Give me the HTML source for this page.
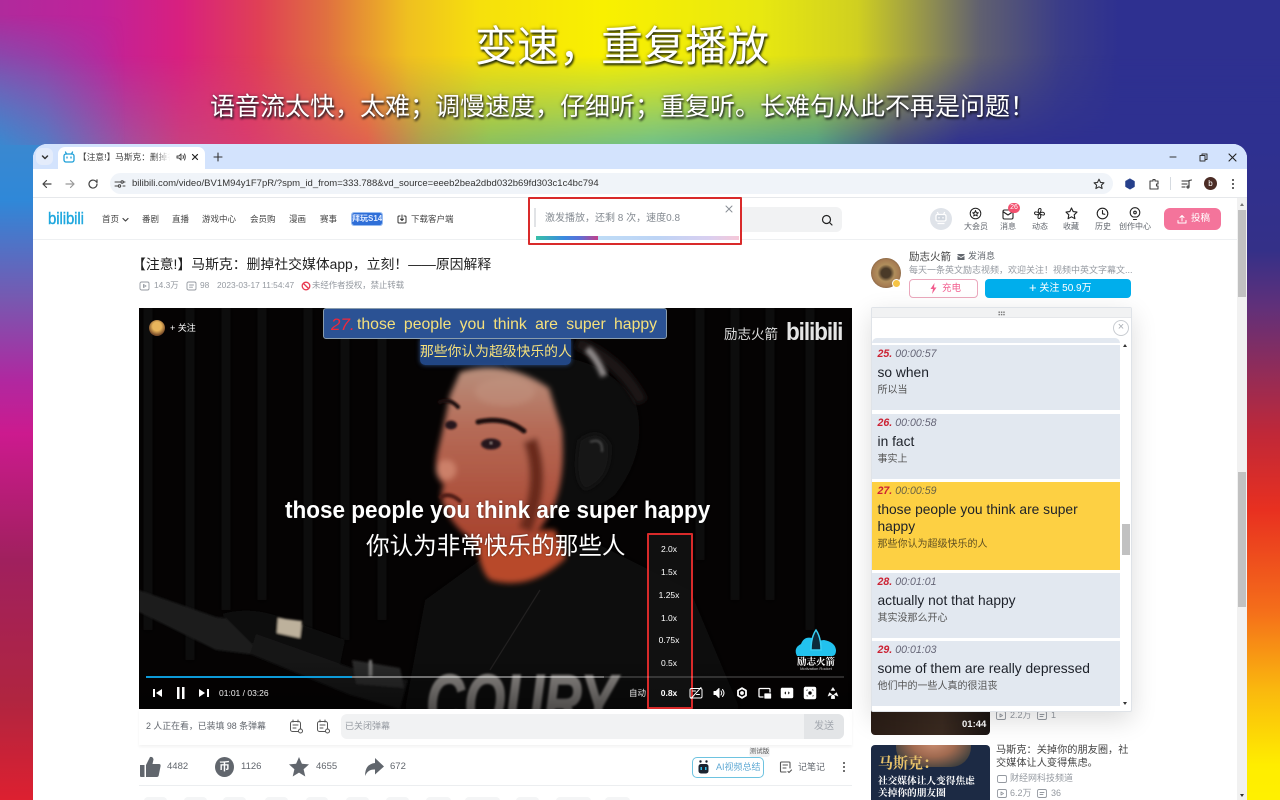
<!DOCTYPE html>
<html lang="zh-CN"><head><meta charset="utf-8"><title>变速，重复播放</title>
<style>
*{box-sizing:border-box;margin:0;padding:0}
html,body{width:1280px;height:800px;overflow:hidden;background:#fff}
body{position:relative;font-family:"Liberation Sans","Noto Sans CJK SC",sans-serif;color:#18191c}
.a{position:absolute}
.t{position:absolute;white-space:nowrap;line-height:1.2}
svg.i{position:absolute;overflow:visible;fill:none;stroke:currentColor;stroke-linecap:round;stroke-linejoin:round}
.nav{font-size:8.5px;color:#444;top:214px}
.lb{font-size:8px;color:#61666d;top:222px;transform:translateX(-50%)}
.sp{font-size:8.5px;color:#fff;left:669px;transform:translateX(-50%)}
.it{position:absolute;left:872px;width:248px;background:#e2e8f0;padding:3px 5px 0 5.5px}
.it .n{font:italic 10.6px/13px "Liberation Sans",sans-serif;color:#667}
.it .n b{color:#cc2233;margin-right:3px}
.it .e{font-size:13.8px;line-height:17px;color:#1d2129;margin-top:3px}
.it .c{font-size:10px;line-height:13px;color:#555;margin-top:2.5px}
.pill{position:absolute;top:797px;height:8px;background:#f4f5f6;border-radius:4px}
.m{position:absolute;white-space:nowrap;line-height:1.2;font-size:8.4px;color:#9499a0;top:280px}
</style></head><body>

<div class="a" style="left:0;top:0;width:1280px;height:146px;background:linear-gradient(90deg,#b02a9c 0,#c0229a 100px,#d8207f 180px,#e04055 260px,#e07040 326px,#efc020 408px,#f6e00c 480px,#f9f000 604px,#e8e810 760px,#d0d020 857px,#908f50 930px,#606070 980px,#3a3c88 1061px,#2e3090 1120px,#2e3090 1280px)"></div>
<div class="a" style="left:0;top:0;width:1280px;height:146px;background:linear-gradient(90deg,#a050a0 0,#a050a0 122px,#c84080 180px,#d83c70 245px,#e06050 367px,#a8a050 424px,#88c060 490px,#6ec08a 653px,#50a088 816px,#404880 898px,#2e3090 960px,#2e3090 1280px);-webkit-mask-image:linear-gradient(180deg,transparent 38%,#000 100%);mask-image:linear-gradient(180deg,transparent 38%,#000 100%)"></div>
<div class="a" style="left:0;top:0;width:130px;height:146px;background:linear-gradient(90deg,#3a88d0 0,rgba(58,136,208,.75) 45px,rgba(58,136,208,0) 125px);-webkit-mask-image:linear-gradient(180deg,transparent 10%,#000 100%);mask-image:linear-gradient(180deg,transparent 10%,#000 100%)"></div>
<div class="a" style="left:0;top:145px;width:40px;height:655px;background:linear-gradient(180deg,#3a88d0 0,#2f88d8 55px,#7858b0 155px,#b028a0 235px,#cc1a8e 289px,#a0205e 415px,#b02540 555px,#dd2030 655px)"></div>
<div class="a" style="left:1240px;top:145px;width:40px;height:655px;background:linear-gradient(180deg,#2e3090 0,#343088 105px,#60307a 161px,#c02838 289px,#e83020 365px,#f56f1a 467px,#fab80e 545px,#ffed00 620px,#fff000 655px)"></div>

<div class="t" style="left:475px;top:22px;font-size:42px;color:#fff;text-shadow:1px 2px 2px rgba(20,30,10,.95),0 0 3px rgba(40,40,20,.5)">变速，重复播放</div>
<div class="t" style="left:210px;top:92px;font-size:25px;color:#fff;text-shadow:1px 2px 2px rgba(20,20,30,.95),0 0 3px rgba(30,30,40,.5)">语音流太快，太难；调慢速度，仔细听；重复听。长难句从此不再是问题！</div>

<!-- window -->
<div class="a" style="left:33px;top:144px;width:1214px;height:656px;background:#fff;border-radius:14px 14px 0 0;overflow:hidden">
 <div class="a" style="left:0;top:0;width:1214px;height:25px;background:#d3e3fd"></div>
 <div class="a" style="left:3px;top:4px;width:17px;height:17px;border-radius:6px;background:#e4ecfb"></div>
 <div class="a" style="left:25px;top:3px;width:147px;height:22px;background:#fff;border-radius:7px 7px 0 0"></div>
 <div class="a" style="left:0;top:25px;width:1214px;height:29px;background:#fff;border-bottom:1px solid #e6e8eb"></div>
 <div class="a" style="left:77px;top:29px;width:1003px;height:21px;background:#f0f4f9;border-radius:11px"></div>
</div>
<svg class="i" style="left:41px;top:153px;color:#333" width="8" height="8" viewBox="0 0 8 8" stroke-width="1.5"><path d="M1.5 3 4 5.500 6.500 3"/></svg>
<svg class="i" style="left:63px;top:151px;color:#1c9fd8" width="12" height="12" viewBox="0 0 12 12" stroke-width="1.3"><rect x="1" y="3" width="10" height="8" rx="2"/><path d="M3.500 3 2.500 1M8.500 3 9.500 1M4 6v1M8 6v1"/></svg>
<div class="t" style="left:78px;top:152px;font-size:8.700px;color:#444;width:92px;overflow:hidden;-webkit-mask-image:linear-gradient(90deg,#000 82%,transparent);mask-image:linear-gradient(90deg,#000 82%,transparent)">【注意!】马斯克：删掉社交媒体app</div>
<svg class="i" style="left:176px;top:152px;color:#444" width="10" height="10" viewBox="0 0 10 10" stroke-width="1"><path d="M1 4v2h2l2 2V2L3 4zM7 3.500q1 1.500 0 3M8.500 2q1.500 3 0 6"/></svg>
<svg class="i" style="left:191px;top:153px;color:#222" width="8" height="8" viewBox="0 0 8 8" stroke-width="1.2"><path d="M1.500 1.500l5 5M6.500 1.500l-5 5"/></svg>
<svg class="i" style="left:213px;top:152px;color:#333" width="10" height="10" viewBox="0 0 10 10" stroke-width="1.1"><path d="M5 1v8M1 5h8"/></svg>
<svg class="i" style="left:1169px;top:153px;color:#333" width="9" height="8" viewBox="0 0 9 8" stroke-width="1.1"><path d="M1 4h6"/></svg>
<svg class="i" style="left:1199px;top:153px;color:#333" width="9" height="9" viewBox="0 0 9 9" stroke-width="1"><rect x="1" y="2.500" width="5" height="5.500"/><path d="M3 2.500V1h5v5.500H6"/></svg>
<svg class="i" style="left:1228px;top:153px;color:#222" width="9" height="9" viewBox="0 0 9 9" stroke-width="1.1"><path d="M1 1l7 7M8 1 1 8"/></svg>

<svg class="i" style="left:41px;top:178px;color:#444" width="12" height="12" viewBox="0 0 12 12" stroke-width="1.200"><path d="M10 6H2M5.500 2.500 2 6l3.500 3.500"/></svg>
<svg class="i" style="left:64px;top:178px;color:#999" width="12" height="12" viewBox="0 0 12 12" stroke-width="1.200"><path d="M2 6h8M6.500 2.500 10 6 6.500 9.500"/></svg>
<svg class="i" style="left:87px;top:178px;color:#444" width="12" height="12" viewBox="0 0 12 12" stroke-width="1.200"><path d="M10 6a4 4 0 1 1-1.200-2.800L10 4.400V1.800"/></svg>
<svg class="i" style="left:114px;top:178px;color:#444" width="12" height="12" viewBox="0 0 12 12" stroke-width="1"><path d="M1 4h6M9 8h2M1 8h3M9 4h2"/><circle cx="8.200" cy="4" r="1.200"/><circle cx="5.500" cy="8" r="1.200"/></svg>
<div class="t" style="left:132px;top:178px;font-size:9.500px;color:#333;letter-spacing:.02px">bilibili.com/video/BV1M94y1F7pR/?spm_id_from=333.788&amp;vd_source=eeeb2bea2dbd032b69fd303c1c4bc794</div>
<svg class="i" style="left:1093px;top:178px;color:#333" width="12" height="12" viewBox="0 0 12 12" stroke-width="1.100"><path d="M6 1.200l1.500 3.200 3.400.4-2.500 2.300.7 3.400L6 8.800l-3.100 1.700.7-3.400L1.100 4.800l3.400-.4z"/></svg>
<svg class="i" style="left:1125px;top:178px;color:#26408b;fill:#26408b" width="10" height="12" viewBox="0 0 10 12" stroke-width=".5"><path d="M5 .7 9.500 3.300v5.400L5 11.300.5 8.700V3.300z"/></svg>
<svg class="i" style="left:1148px;top:178px;color:#444" width="12" height="12" viewBox="0 0 12 12" stroke-width="1.100"><path d="M2 3h3V1.500h2V3h3v3H8.500v2H10v3H2z"/></svg>
<div class="a" style="left:1170px;top:177px;width:1px;height:13px;background:#d5dae0"></div>
<svg class="i" style="left:1181px;top:178px;color:#333" width="12" height="12" viewBox="0 0 12 12" stroke-width="1.100"><path d="M1 3h6M1 6h5M1 9h3M8 9V2.500l2.500-.5"/><circle cx="7" cy="9" r="1"/></svg>
<div class="a" style="left:1204px;top:177px;width:13px;height:13px;border-radius:50%;background:#4b2c25;color:#fff;font-size:8px;line-height:13px;text-align:center">b</div>
<div class="a" style="left:1232px;top:179px;width:2px;height:2px;background:#333;box-shadow:0 4px #333,0 8px #333;border-radius:50%"></div>

<!-- bili header -->
<div class="a" style="left:33px;top:239px;width:1204px;height:1px;background:#eef0f2"></div>
<div class="t" style="left:48px;top:209px;font-size:17px;font-weight:400;color:#1ea7de;letter-spacing:-.1px;line-height:20px;-webkit-text-stroke:.4px #1ea7de;transform:scaleX(.88);transform-origin:left">bilibili</div>
<div class="t nav" style="left:102px">首页</div>
<svg class="i" style="left:122px;top:217px;color:#444" width="7" height="6" viewBox="0 0 7 6" stroke-width="1.200"><path d="M1 1.500 3.500 4 6 1.500"/></svg>
<div class="t nav" style="left:142px">番剧</div>
<div class="t nav" style="left:172px">直播</div>
<div class="t nav" style="left:202px">游戏中心</div>
<div class="t nav" style="left:250px">会员购</div>
<div class="t nav" style="left:289px">漫画</div>
<div class="t nav" style="left:320px">赛事</div>
<div class="t" style="left:352px;top:213px;width:30px;height:12px;background:#2f6fd8;color:#dfeaff;font-size:8px;line-height:12px;text-align:center;font-weight:700;border-radius:2px;outline:1px solid #97bcf0">拜玩S14</div>
<svg class="i" style="left:397px;top:214px;color:#333" width="10" height="11" viewBox="0 0 10 11" stroke-width="1"><path d="M3 2H2q-1 0-1 1v5q0 1 1 1h6q1 0 1-1V3q0-1-1-1H7M5 1v5M3.500 5 5 6.500 6.500 5"/></svg>
<div class="t nav" style="left:411px">下载客户端</div>

<div class="a" style="left:742px;top:207px;width:100px;height:25px;background:#f1f2f3;border-radius:0 6px 6px 0"></div>
<svg class="i" style="left:821px;top:214px;color:#222" width="12" height="12" viewBox="0 0 12 12" stroke-width="1.200"><circle cx="5.500" cy="5.500" r="4"/><path d="M8.500 8.500 11 11"/></svg>

<!-- toast -->
<div class="a" style="left:528px;top:197px;width:214px;height:48px;background:#fff;border:2px solid #d92a2a;border-radius:1px"></div>
<div class="a" style="left:534px;top:208px;width:2px;height:19px;background:#e1e3e6"></div>
<div class="t" style="left:545px;top:213px;font-size:10px;color:#858b92">激发播放，还剩 8 次，速度0.8</div>
<svg class="i" style="left:725px;top:205px;color:#8a8f96" width="8" height="8" viewBox="0 0 8 8" stroke-width="1"><path d="M1 1l6 6M7 1 1 7"/></svg>
<div class="a" style="left:536px;top:236px;width:203px;height:4px;background:linear-gradient(90deg,#bfe4f8,#bdd4f5 60%,#d9cff0 85%,#f6c8d8)"></div>
<div class="a" style="left:536px;top:236px;width:62px;height:4px;background:linear-gradient(90deg,#38c0a8,#3a8ae0 45%,#5a70d8 70%,#c2408a)"></div>

<!-- right header icons -->
<div class="a" style="left:930px;top:208px;width:22px;height:22px;border-radius:50%;background:#dfe3e9"></div>
<svg class="i" style="left:934px;top:211px;color:#fff;stroke-width:1.300" width="14" height="14" viewBox="0 0 14 14"><rect x="2" y="3.500" width="10" height="6.500" rx="1.500" fill="#cfd5dd"/><path d="M4.500 3.500 3.500 1.500M9.500 3.500l1-2M5 6.500v.5M9 6.500v.5M4 12.500h6" /></svg>
<svg class="i" style="left:969px;top:207px;color:#222" width="13" height="13" viewBox="0 0 13 13" stroke-width="1"><circle cx="6.500" cy="6.500" r="5.300"/><path d="M6.500 3.500 7.300 5.600 9.300 5.800 7.800 7.100 8.300 9 6.500 8 4.700 9 5.200 7.100 3.700 5.800 5.700 5.600z"/></svg>
<div class="t lb" style="left:976px">大会员</div>
<svg class="i" style="left:1002px;top:208px;color:#222" width="12" height="12" viewBox="0 0 12 12" stroke-width="1.100"><rect x="1" y="2" width="10" height="9" rx="1.500"/><path d="M1.500 4 6 7l4.500-3"/></svg>
<div class="a" style="left:1008px;top:203px;width:12px;height:10px;border-radius:5px;background:#f2506e;color:#fff;font-size:7px;line-height:10px;text-align:center">26</div>
<div class="t lb" style="left:1008px">消息</div>
<svg class="i" style="left:1033px;top:207px;color:#222" width="13" height="13" viewBox="0 0 13 13" stroke-width="1"><path d="M6.500 6.500C4.500 5 5 1.500 7 1.500c1.500 0 1.500 2.500-.5 5zM6.500 6.500c1.500-2 5-1.500 5 .5 0 1.500-2.500 1.500-5-.5zM6.500 6.500c2 1.500 1.500 5-.5 5-1.500 0-1.500-2.500.5-5zM6.500 6.500c-1.500 2-5 1.500-5-.5 0-1.500 2.500-1.500 5 .5z"/></svg>
<div class="t lb" style="left:1040px">动态</div>
<svg class="i" style="left:1065px;top:207px;color:#222" width="13" height="13" viewBox="0 0 13 13" stroke-width="1.100"><path d="M6.500 1 8.200 4.600 12 5.100 9.200 7.800 9.900 11.700 6.500 9.800 3.100 11.700 3.800 7.800 1 5.100 4.800 4.600z"/></svg>
<div class="t lb" style="left:1071px">收藏</div>
<svg class="i" style="left:1096px;top:207px;color:#222" width="13" height="13" viewBox="0 0 13 13" stroke-width="1.100"><circle cx="6.500" cy="6.500" r="5.300"/><path d="M6.500 3.500v3.300l2.300.5"/></svg>
<div class="t lb" style="left:1103px">历史</div>
<svg class="i" style="left:1129px;top:207px;color:#222" width="12" height="14" viewBox="0 0 12 14" stroke-width="1.100"><path d="M4 10Q1.200 8.500 1.200 5.500a4.800 4.800 0 0 1 9.600 0Q10.800 8.500 8 10zM4.500 12.500h3"/><circle cx="6" cy="5.500" r="1.300"/></svg>
<div class="t lb" style="left:1135px">创作中心</div>
<div class="a" style="left:1164px;top:208px;width:57px;height:22px;background:#f4749b;border-radius:6px"></div>
<svg class="i" style="left:1177px;top:214px;color:#fff" width="10" height="10" viewBox="0 0 10 10" stroke-width="1"><path d="M5 7V1.500M3 3.500l2-2 2 2M1 6.500V9h8V6.500"/></svg>
<div class="t" style="left:1191px;top:213px;font-size:9.500px;color:#fff">投稿</div>

<!-- title -->
<div class="t" style="left:132px;top:256px;font-size:13.850px;color:#222">【注意!】马斯克：删掉社交媒体app，立刻！——原因解释</div>
<svg class="i" style="left:139px;top:281px;color:#9499a0" width="11" height="10" viewBox="0 0 11 10" stroke-width=".9"><rect x="1" y="1" width="9" height="8" rx="1.500"/><path d="M4.500 3.500 7 5 4.500 6.500z"/></svg>
<div class="m" style="left:154px">14.3万</div>
<svg class="i" style="left:186px;top:281px;color:#9499a0" width="11" height="10" viewBox="0 0 11 10" stroke-width=".9"><rect x="1" y="1" width="9" height="8" rx="1.500"/><path d="M3.500 4h4M3.500 6.200h3"/></svg>
<div class="m" style="left:200px">98</div>
<div class="m" style="left:217px">2023-03-17 11:54:47</div>
<svg class="i" style="left:301px;top:281px;color:#e8384f" width="10" height="10" viewBox="0 0 10 10" stroke-width="1.300"><circle cx="5" cy="5" r="3.800"/><path d="M2.500 2.500l5 5"/></svg>
<div class="m" style="left:312px">未经作者授权，禁止转载</div>

<!-- video -->
<svg class="a" style="left:139px;top:308px" width="713" height="401" viewBox="139 308 713 401">
 <defs>
  <filter id="b3" x="-30%" y="-30%" width="160%" height="160%"><feGaussianBlur stdDeviation="3"/></filter>
  <filter id="b2" x="-30%" y="-30%" width="160%" height="160%"><feGaussianBlur stdDeviation="2"/></filter>
  <filter id="b1" x="-30%" y="-30%" width="160%" height="160%"><feGaussianBlur stdDeviation="1"/></filter>
  <linearGradient id="sk" x1="0" y1="0" x2="0" y2="1"><stop offset="0" stop-color="#b88f7c"/><stop offset=".35" stop-color="#b56a56"/><stop offset="1" stop-color="#a8412c"/></linearGradient>
  <linearGradient id="vgrad" x1="0" y1="0" x2="0" y2="1"><stop offset="0" stop-color="#000" stop-opacity="0"/><stop offset="1" stop-color="#000" stop-opacity=".45"/></linearGradient>
 </defs>
 <rect x="139" y="308" width="713" height="401" fill="#050303"/>
 <g stroke="#0e0809" stroke-width="9" filter="url(#b3)" fill="none">
  <path d="M148 308V630M190 308V660M226 308V610M262 308V600M308 308V650M345 308V640M382 308V620"/>
  <path d="M700 308V560M735 308V600M770 308V600M810 308V630"/>
 </g>
 <path d="M405 709 425 600 480 560 600 545 690 590 740 709z" fill="#090808" filter="url(#b3)"/>
 <!-- hair/headphones -->
 <path d="M500 362Q590 340 635 400Q650 450 615 495Q590 515 555 510L540 400z" fill="#0a0808" filter="url(#b3)"/>
 <path d="M577 343Q620 360 642 402" stroke="#1b1818" stroke-width="12" fill="none" filter="url(#b3)"/>
 <path d="M587 349Q597 358 604 376" stroke="#8f8a8a" stroke-width="7" fill="none" filter="url(#b2)"/>
 <path d="M579 440Q600 425 610 445Q612 480 585 490Q572 480 579 440z" fill="#161515" filter="url(#b3)"/>
 <path d="M590 442Q603 437 602 452" stroke="#444" stroke-width="2.500" fill="none" filter="url(#b1)"/>
 <!-- neck -->
 <path d="M476 530H555L566 558Q530 592 490 580Q478 570 476 530z" fill="#b84a2a" filter="url(#b3)"/>
 <!-- face -->
 <g filter="url(#b3)">
  <path d="M460 372Q505 358 549 388L562 430Q566 480 552 510L530 545H480Q455 530 446 510Q438 495 444 485Q432 475 438 450Q445 420 450 395z" fill="url(#sk)"/>
  <ellipse cx="505" cy="392" rx="30" ry="14" fill="#cda38f" opacity=".3"/>
  <ellipse cx="446" cy="470" rx="10" ry="10" fill="#d38a72" opacity=".8"/>
  <path d="M530 440Q545 480 525 530" stroke="#6a2a1e" stroke-width="14" fill="none"/>
 </g>
 <g filter="url(#b1)" fill="none" stroke-linecap="round">
  <path d="M478 422Q505 416 524 431" stroke="#1f110e" stroke-width="5"/>
  <path d="M440 402Q450 398 458 407" stroke="#1f110e" stroke-width="4"/>
  <path d="M441 497Q450 492 460 501" stroke="#4f1c15" stroke-width="4"/>
  <ellipse cx="491" cy="444" rx="10" ry="5.500" fill="#25161a" stroke="none"/>
  <ellipse cx="451" cy="425" rx="6" ry="4.500" fill="#25161a" stroke="none"/>
 </g>
 <circle cx="491" cy="443" r="1.500" fill="#9a8f88" filter="url(#b1)"/>
 <!-- mic -->
 <g filter="url(#b1)">
  <path d="M139 590 216 617 258 622 296 635 296 660 216 650 139 612z" fill="#1f1e1f"/>
  <path d="M222 614Q250 606 280 617L345 640 340 664Q300 664 258 650z" fill="#101010"/>
  <path d="M278 618 302 621 300 638 277 633z" fill="#bdb19c"/>
  <path d="M256 634 352 668 408 680 400 709 350 695 250 654z" fill="#151415"/>
  <path d="M352 660 400 668 404 688 356 684z" fill="#2a2929"/>
  <rect x="369" y="660" width="3" height="16" fill="#7a7978"/>
 </g>
 <path d="M490 670 540 590" stroke="#222020" stroke-width="1.200"/>
 <text x="426" y="728" font-family="Liberation Sans" font-weight="700" font-style="italic" font-size="76" fill="#8f8b88" textLength="190" lengthAdjust="spacingAndGlyphs" stroke="#8f8b88" stroke-width="1.500" filter="url(#b1)">COURY</text>
 <rect x="139" y="660" width="713" height="49" fill="url(#vgrad)"/>
 <!-- rocket -->
 <path d="M797 656Q793 648 801 644Q804 636 812 638L816 641 824 640Q835 642 836 650Q836 656 832 656z" fill="#22c2ee"/>
 <path d="M816 630Q811 637 811 650H821Q821 637 816 630z" fill="#0c2a3a" stroke="#38d0f4" stroke-width="1.500"/>
</svg>

<!-- extension captions -->
<div class="t" style="left:420px;top:339px;width:151px;height:26px;background:rgba(38,80,150,.88);border-radius:0 0 5px 5px;font-size:13.800px;line-height:25px;text-align:center;color:#f5e07c;box-shadow:0 0 5px rgba(60,110,190,.7)">那些你认为超级快乐的人</div>
<div class="a" style="left:323px;top:308px;width:344px;height:31px;background:#2b5294;border:1px solid #8a9dad;border-radius:3px"></div>
<div class="t" style="left:331px;top:314px;font-size:17px;line-height:22px;color:#f0283a;font-style:italic">27.</div>
<div class="t" style="left:357px;top:314px;font-size:15.800px;line-height:22px;color:#f5e07c;word-spacing:3.900px">those people you think are super happy</div>

<div class="a" style="left:149px;top:320px;width:16px;height:16px;border-radius:50%;background:radial-gradient(circle at 50% 40%,#e9b55c 0 35%,#7a4d2a 70%)"></div>
<div class="t" style="left:170px;top:323px;font-size:9px;color:#fff">+ 关注</div>
<div class="t" style="left:724px;top:327px;font-size:13.500px;color:#ddd">励志火箭</div>
<div class="t" style="left:786px;top:317px;font-size:25px;font-weight:700;color:#e5e5e5;letter-spacing:-1.200px;transform:scaleX(.9);transform-origin:left">bilibili</div>
<div class="t" style="left:796px;top:656px;width:40px;text-align:center;font-family:'Noto Serif CJK SC','Liberation Serif',serif;font-size:9.500px;font-weight:700;color:#fff">励志火箭</div>
<div class="t" style="left:796px;top:667px;width:40px;text-align:center;font-size:4px;color:#ccc">Motivation Rocket</div>

<div class="t" style="left:285px;top:497px;font-size:24px;font-weight:700;color:#fff;transform:scaleX(.938);transform-origin:left;text-shadow:0 0 2px rgba(0,0,0,.5)">those people you think are super happy</div>
<div class="t" style="left:366px;top:533px;font-size:23.600px;color:#fff;text-shadow:0 0 2px rgba(0,0,0,.5)">你认为非常快乐的那些人</div>

<!-- speed box -->
<div class="a" style="left:647px;top:533px;width:46px;height:176px;background:rgba(18,18,18,.9);border:2px solid #d92a2a;border-radius:1px"></div>
<div class="t sp" style="top:544px">2.0x</div>
<div class="t sp" style="top:567px">1.5x</div>
<div class="t sp" style="top:590px">1.25x</div>
<div class="t sp" style="top:613px">1.0x</div>
<div class="t sp" style="top:635px">0.75x</div>
<div class="t sp" style="top:658px">0.5x</div>
<div class="t sp" style="top:688px;font-weight:700">0.8x</div>

<!-- progress and controls -->
<div class="a" style="left:146px;top:676px;width:698px;height:1.500px;background:rgba(255,255,255,.16)"></div>
<div class="a" style="left:352px;top:676px;width:252px;height:1.500px;background:rgba(255,255,255,.3)"></div>
<div class="a" style="left:146px;top:676px;width:206px;height:2px;background:#0d9ad8"></div>
<svg class="a" style="left:139px;top:685px" width="80" height="16" viewBox="139 685 80 16"><path d="M153 689h2v8h-2zM162 689v8l-6-4zM177 687h2.500v12H177zM182 687h2.500v12H182zM207 689h2v8h-2zM199 689v8l6-4z" fill="#fff"/></svg>
<div class="t" style="left:219px;top:688px;font-size:8.500px;color:#eee">01:01 / 03:26</div>
<div class="t" style="left:629px;top:688px;font-size:8.500px;color:#eee">自动</div>
<svg class="i" style="left:689px;top:686px;color:#fff" width="14" height="14" viewBox="0 0 14 14" stroke-width="1"><rect x="1" y="2.500" width="12" height="9.500" rx="1.500"/><path d="M2 12.500 12 1.500"/><path d="M3.500 5h3M7.500 8.500h3"/></svg>
<svg class="i" style="left:713px;top:687px;color:#fff;fill:#fff" width="12" height="12" viewBox="0 0 12 12" stroke-width="1"><path d="M1 4.500v3h2l3 3v-9l-3 3z"/><path fill="none" d="M8 4q1.500 2 0 4M9.500 2.500q3 3.500 0 7"/></svg>
<svg class="i" style="left:736px;top:687px;color:#fff" width="12" height="12" viewBox="0 0 12 12" stroke-width="1.800"><path d="M6 1.200 10 3.500v5L6 10.800 2 8.500v-5z"/><circle cx="6" cy="6" r="1"/></svg>
<svg class="i" style="left:758px;top:687px;color:#fff" width="13" height="12" viewBox="0 0 13 12" stroke-width="1.300"><path d="M5 10H2Q1 10 1 9V2.500q0-1 1-1h9q1 0 1 1V5"/><rect x="7" y="7" width="5.500" height="4" fill="#fff"/></svg>
<svg class="i" style="left:781px;top:688px;color:#fff;fill:#fff" width="12" height="10" viewBox="0 0 12 10" stroke-width=".5"><path fill-rule="evenodd" d="M1 0h10q1 0 1 1v8q0 1-1 1H1q-1 0-1-1V1q0-1 1-1zM5 3 3 5l2 2zM7 3v4l2-2z"/></svg>
<svg class="i" style="left:804px;top:687px;color:#fff;fill:#fff" width="12" height="12" viewBox="0 0 12 12" stroke-width=".5"><path fill-rule="evenodd" d="M1.500 0h9Q12 0 12 1.500v9Q12 12 10.500 12h-9Q0 12 0 10.500v-9Q0 0 1.500 0zM2.500 4.500 4.500 2.500H2.500zM7.500 2.500 9.500 4.500V2.500zM2.500 7.500v2h2zM9.500 7.500l-2 2h2zM6 4a2 2 0 1 0 .01 0z"/></svg>
<svg class="i" style="left:827px;top:687px;color:#fff;fill:#fff" width="12" height="12" viewBox="0 0 12 12" stroke-width=".4"><path d="M6 .5l2 3H4zM1 9l1.500-3.500L5 7.500zM11 9 9.500 5.500 7 7.500zM6 8q1.700 0 1.700 1.700v2H4.300v-2Q4.300 8 6 8z"/></svg>

<!-- danmaku bar -->
<div class="a" style="left:139px;top:709px;width:713px;height:36px;background:#fff;box-shadow:0 2px 3px rgba(0,0,0,.05)"></div>
<div class="t" style="left:146px;top:721px;font-size:8.900px;color:#61666d">2 人正在看，已装填 98 条弹幕</div>
<svg class="i" style="left:289px;top:719px;color:#555" width="14" height="15" viewBox="0 0 14 15" stroke-width="1"><rect x="1.500" y="2.500" width="10" height="10" rx="2"/><path d="M4 1v2M9 1v2M4 6h5M4 9h3"/><circle cx="11.500" cy="12" r="2" fill="#fff"/></svg>
<svg class="i" style="left:316px;top:719px;color:#555" width="14" height="15" viewBox="0 0 14 15" stroke-width="1"><rect x="1.500" y="2.500" width="10" height="10" rx="2"/><path d="M4 1v2M9 1v2M4 6h5M4 9h3"/><circle cx="11.500" cy="12" r="2" fill="#fff"/></svg>
<div class="a" style="left:341px;top:714px;width:503px;height:25px;background:#f1f2f3;border-radius:6px"></div>
<div class="t" style="left:345px;top:721px;font-size:9px;color:#9499a0">已关闭弹幕</div>
<div class="a" style="left:804px;top:714px;width:40px;height:25px;background:#e3e5e7;border-radius:0 6px 6px 0"></div>
<div class="t" style="left:814px;top:721px;font-size:10px;color:#a2a7ae">发送</div>

<!-- actions -->
<svg class="a" style="left:139px;top:755px" width="24" height="24" viewBox="0 0 24 24" fill="#61666d"><path d="M1 10h4.500v12H2q-1 0-1-1zM7 10l4-8q3-.5 3.500 2.500L13.500 9H20q2 0 1.500 2.500l-1.800 9q-.3 1.500-2 1.500H7z"/></svg>
<div class="t" style="left:167px;top:761px;font-size:9.500px;color:#61666d">4482</div>
<div class="a" style="left:215px;top:757px;width:19px;height:20px;border-radius:50%;background:#61666d;color:#fff;font-size:11px;line-height:20px;text-align:center;font-weight:700">币</div>
<div class="t" style="left:241px;top:761px;font-size:9.500px;color:#61666d">1126</div>
<svg class="a" style="left:289px;top:756px" width="20" height="22" viewBox="0 0 20 22" fill="#61666d"><path d="M10 1l2.900 6.800 7.100.6-5.400 4.800 1.700 7.300L10 16.600l-6.300 3.900 1.700-7.300L0 8.400l7.100-.6z"/></svg>
<div class="t" style="left:316px;top:761px;font-size:9.500px;color:#61666d">4655</div>
<svg class="a" style="left:364px;top:757px" width="20" height="20" viewBox="0 0 20 20" fill="#61666d"><path d="M11 1l9 8.500-9 8v-5Q4 12 1 19 1 7 11 6z"/></svg>
<div class="t" style="left:390px;top:761px;font-size:9.500px;color:#61666d">672</div>
<div class="a" style="left:692px;top:757px;width:72px;height:21px;border:1px solid #6ec3e0;border-radius:5px;background:#fff"></div>
<svg class="a" style="left:697px;top:759px" width="13" height="17" viewBox="0 0 13 17"><rect x="1.500" y="5" width="10" height="9.500" rx="2.500" fill="#1b2330"/><circle cx="3.500" cy="2.500" r="1.200" fill="#1b2330"/><circle cx="9.500" cy="2.500" r="1.200" fill="#1b2330"/><rect x="3.500" y="8" width="1.500" height="3" fill="#35c0ec"/><rect x="8" y="8" width="1.500" height="3" fill="#35c0ec"/></svg>
<div class="t" style="left:716px;top:762px;font-size:9px;color:#5fa9d4">AI视频总结</div>
<div class="t" style="left:749px;top:747px;width:21px;height:10px;background:#f1f2f3;border-radius:3px;font-size:6.500px;line-height:10px;text-align:center;color:#555">测试版</div>
<svg class="i" style="left:779px;top:760px;color:#555" width="14" height="14" viewBox="0 0 14 14" stroke-width="1.100"><path d="M11 8V3q0-1-1-1H2.500q-1 0-1 1v8q0 1 1 1H7M4 5h4.500M4 8h3M9 11.500l1 1 2.500-2.500"/></svg>
<div class="t" style="left:798px;top:762px;font-size:9px;color:#61666d">记笔记</div>
<div class="a" style="left:843px;top:762px;width:2px;height:2px;background:#444;box-shadow:0 4px #444,0 8px #444;border-radius:50%"></div>
<div class="a" style="left:139px;top:785px;width:713px;height:1px;background:#eceef0"></div>
<div class="pill" style="left:144px;width:23px"></div><div class="pill" style="left:184px;width:23px"></div><div class="pill" style="left:223px;width:23px"></div><div class="pill" style="left:265px;width:23px"></div><div class="pill" style="left:306px;width:22px"></div><div class="pill" style="left:346px;width:23px"></div><div class="pill" style="left:386px;width:23px"></div><div class="pill" style="left:426px;width:25px"></div><div class="pill" style="left:465px;width:35px"></div><div class="pill" style="left:516px;width:23px"></div><div class="pill" style="left:556px;width:35px"></div><div class="pill" style="left:605px;width:25px"></div>

<!-- author -->
<div class="a" style="left:871px;top:258px;width:30px;height:30px;border-radius:50%;background:radial-gradient(circle at 50% 50%,#4a3a28 0 22%,#b08e5c 40%,#a67c52 62%,#3e3128)"></div>
<div class="a" style="left:892px;top:279px;width:9px;height:9px;border-radius:50%;background:#f6c445;border:1px solid #fff"></div>
<div class="t" style="left:909px;top:251px;font-size:10.500px;color:#444">励志火箭</div>
<svg class="a" style="left:957px;top:253px" width="8" height="8" viewBox="0 0 8 8" fill="#61666d"><path d="M.5 1h7v1L4 4 .5 2zM.5 3 4 5 7.500 3v4h-7z"/></svg>
<div class="t" style="left:968px;top:251px;font-size:9px;color:#61666d">发消息</div>
<div class="t" style="left:909px;top:265px;font-size:9px;color:#9499a0">每天一条英文励志视频，欢迎关注！视频中英文字幕文...</div>
<div class="a" style="left:909px;top:279px;width:69px;height:19px;background:#fff;border:1px solid #eba8bd;border-radius:4px"></div>
<svg class="a" style="left:930px;top:283px" width="7" height="11" viewBox="0 0 7 11" fill="#f25d8e"><path d="M4.500 0 .5 6H3L2 11 6.500 4.500H4z"/></svg>
<div class="t" style="left:942px;top:283px;font-size:9.500px;color:#f25d8e">充电</div>
<div class="a" style="left:985px;top:279px;width:146px;height:19px;background:#00aeec;border-radius:4px"></div>
<div class="t" style="left:1029px;top:283px;font-size:10px;color:#fff"><span style="font-size:13px;line-height:10px;vertical-align:-1px">+</span> 关注 50.9万</div>

<!-- recommended -->
<div class="a" style="left:871px;top:706px;width:119px;height:29px;background:linear-gradient(90deg,#2a1d16,#3a2a20 60%,#1a1412);border-radius:0 0 4px 4px"></div>
<div class="t" style="left:962px;top:719px;font-size:9.500px;font-weight:700;color:#fff">01:44</div>
<svg class="i" style="left:996px;top:711px;color:#9499a0" width="10" height="9" viewBox="0 0 10 9" stroke-width=".9"><rect x=".5" y=".5" width="9" height="8" rx="1.500"/><path d="M4 3 6.500 4.500 4 6z"/></svg>
<div class="t" style="left:1010px;top:710px;font-size:9px;color:#9499a0">2.2万</div>
<svg class="i" style="left:1037px;top:711px;color:#9499a0" width="10" height="9" viewBox="0 0 10 9" stroke-width=".9"><rect x=".5" y=".5" width="9" height="8" rx="1.500"/><path d="M3 3.500h4M3 5.500h3"/></svg>
<div class="t" style="left:1051px;top:710px;font-size:9px;color:#9499a0">1</div>
<div class="a" style="left:871px;top:745px;width:119px;height:55px;background:#1c2a44;border-radius:4px 4px 0 0;overflow:hidden">
 <div class="a" style="left:25px;top:-2px;width:75px;height:24px;background:radial-gradient(ellipse at 50% 0,#c98c70 0,#a06a50 40%,#4a4540 75%,#2a2a30);border-radius:0 0 20px 20px"></div>
 <div class="t" style="left:7px;top:9px;font-family:'Noto Serif CJK SC',serif;font-size:15px;font-weight:700;color:#e7c26a">马斯克：</div>
 <div class="t" style="left:7px;top:30px;font-family:'Noto Serif CJK SC',serif;font-size:9.700px;font-weight:700;color:#fff">社交媒体让人变得焦虑</div>
 <div class="t" style="left:7px;top:42px;font-family:'Noto Serif CJK SC',serif;font-size:9.700px;font-weight:700;color:#fff">关掉你的朋友圈</div>
</div>
<div class="t" style="left:996px;top:745px;font-size:10.200px;color:#444">马斯克：关掉你的朋友圈，社</div>
<div class="t" style="left:996px;top:758px;font-size:10.200px;color:#444">交媒体让人变得焦虑。</div>
<svg class="i" style="left:997px;top:775px;color:#9499a0" width="10" height="8" viewBox="0 0 10 8" stroke-width=".9"><rect x=".5" y=".5" width="9" height="7" rx="1.500"/></svg>
<div class="t" style="left:1010px;top:773px;font-size:9px;color:#9499a0">财经网科技频道</div>
<svg class="i" style="left:997px;top:789px;color:#9499a0" width="10" height="9" viewBox="0 0 10 9" stroke-width=".9"><rect x=".5" y=".5" width="9" height="8" rx="1.500"/><path d="M4 3 6.500 4.500 4 6z"/></svg>
<div class="t" style="left:1010px;top:788px;font-size:9px;color:#9499a0">6.2万</div>
<svg class="i" style="left:1037px;top:789px;color:#9499a0" width="10" height="9" viewBox="0 0 10 9" stroke-width=".9"><rect x=".5" y=".5" width="9" height="8" rx="1.500"/><path d="M3 3.500h4M3 5.500h3"/></svg>
<div class="t" style="left:1051px;top:788px;font-size:9px;color:#9499a0">36</div>

<!-- page scrollbar -->
<div class="a" style="left:1237px;top:198px;width:10px;height:602px;background:#f1f1f1"></div>
<div class="a" style="left:1238px;top:210px;width:8px;height:87px;background:#c1c1c1"></div>
<div class="a" style="left:1238px;top:472px;width:8px;height:135px;background:#c1c1c1"></div>
<div class="a" style="left:1240px;top:203px;border:2.500px solid transparent;border-bottom:3px solid #777;border-top:0"></div>
<div class="a" style="left:1240px;top:794px;border:2.500px solid transparent;border-top:3px solid #333;border-bottom:0"></div>

<!-- caption panel -->
<div class="a" style="left:871px;top:307px;width:261px;height:405px;background:#fff;border:1px solid #dfe3e8;border-radius:2px;box-shadow:0 8px 26px rgba(0,0,0,.14)"></div>
<div class="a" style="left:872px;top:308px;width:259px;height:10px;background:#f1f2f3;border-bottom:1px solid #e5e7ea"></div>
<div class="a" style="left:998px;top:311px;width:7px;height:5px;background-image:radial-gradient(circle,#777 .7px,transparent .8px);background-size:2.400px 2.400px"></div>
<div class="a" style="left:1113px;top:320px;width:16px;height:16px;border-radius:50%;border:1px solid #c8ccd1;color:#a8adb3;font-size:11px;line-height:13px;text-align:center">×</div>
<div class="a" style="left:872px;top:338px;width:248px;height:5px;background:#e2e8f0;border-radius:5px 5px 0 0"></div>

<div class="it" style="top:345px;height:65px"><div class="n"><b>25.</b>00:00:57</div><div class="e">so when</div><div class="c">所以当</div></div>
<div class="it" style="top:414px;height:65px"><div class="n"><b>26.</b>00:00:58</div><div class="e">in fact</div><div class="c">事实上</div></div>
<div class="it" style="top:482px;height:88px;background:#fdd043"><div class="n" style="color:#6b6345"><b>27.</b>00:00:59</div><div class="e">those people you think are super happy</div><div class="c" style="color:#5f4f20">那些你认为超级快乐的人</div></div>
<div class="it" style="top:573px;height:65px"><div class="n"><b>28.</b>00:01:01</div><div class="e">actually not that happy</div><div class="c">其实没那么开心</div></div>
<div class="it" style="top:641px;height:65px"><div class="n"><b>29.</b>00:01:03</div><div class="e">some of them are really depressed</div><div class="c">他们中的一些人真的很沮丧</div></div>

<div class="a" style="left:1121px;top:338px;width:10px;height:370px;background:#fff"></div>
<div class="a" style="left:1123px;top:344px;border:2.500px solid transparent;border-bottom:3px solid #333;border-top:0"></div>
<div class="a" style="left:1123px;top:702px;border:2.500px solid transparent;border-top:3px solid #333;border-bottom:0"></div>
<div class="a" style="left:1122px;top:524px;width:8px;height:31px;background:#c1c1c1"></div>

</body></html>
